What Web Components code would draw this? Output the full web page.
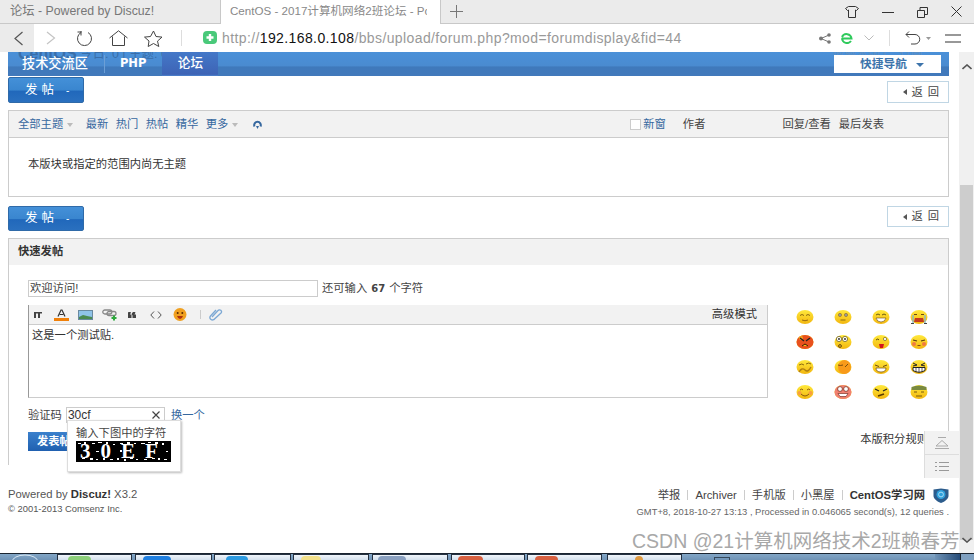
<!DOCTYPE html>
<html lang="zh-CN"><head><meta charset="utf-8"><title>CentOS</title>
<style>
html,body{margin:0;padding:0;height:100%}
body{width:974px;height:560px;overflow:hidden;display:flex;flex-direction:column;background:#fff;color:#333;font:11.3px/1.3 "Liberation Sans","Noto Sans CJK SC",sans-serif;position:relative}
</style></head><body>
<browser-chrome></browser-chrome>
<page-view>
  <forum-nav></forum-nav>
  <action-row top="1"><post-button slot="left" h="26">发帖</post-button><back-button slot="right" h="22" mt="4">返回</back-button></action-row>
  <thread-list></thread-list>
  <action-row top="9"><post-button slot="left" h="25">发帖</post-button><back-button slot="right" h="21" mt="0">返回</back-button></action-row>
  <quick-post></quick-post>
  <site-footer></site-footer>
</page-view>
<task-bar></task-bar>
<side-float></side-float>
<water-mark>CSDN @21计算机网络技术2班赖春芳</water-mark>
<script>
function def(name, html, setup){
  const t=document.createElement('template');t.innerHTML=html;
  customElements.define(name,class extends HTMLElement{
    constructor(){super();this.attachShadow({mode:'open'}).appendChild(t.content.cloneNode(true));}
    connectedCallback(){if(setup)setup(this,this.shadowRoot);}
  });
}
function faceSvg(kind,i){
  const F={
   a:'<path d="M4 6.500q2-2 4 0M10 6.500q2-2 4 0" stroke="#8a6a10" fill="none"/><path d="M6 11q3 1.500 6 0" stroke="#9a6a10" fill="none"/>',
   b:'<circle cx="6" cy="6" r="1.600" fill="#fff" stroke="#6a4a10" stroke-width=".6"/><circle cx="12" cy="6" r="1.600" fill="#fff" stroke="#6a4a10" stroke-width=".6"/><circle cx="6" cy="6" r=".8" fill="#222"/><circle cx="12" cy="6" r=".8" fill="#222"/><path d="M6.500 11h5" stroke="#8a6a10"/>',
   c:'<path d="M4 6q2-2 4 0M10 6q2-2 4 0" stroke="#6a5a10" fill="none"/><path d="M4 9h10q-1 4-5 4t-5-4z" fill="#fff" stroke="#6a4a10" stroke-width=".6"/>',
   d:'<path d="M4 5.500h3M11 5.500h3" stroke="#6a4a10"/><path d="M5 9h8l1 4H4z" fill="#c43a20"/><path d="M3 6v8M15 6v8" stroke="#7fb4d8" stroke-width="1.300"/><path d="M1 14.500h3M14 14.500h3" stroke="#444"/>',
   e:'<ellipse cx="9" cy="8" rx="8.500" ry="7" fill="#e8501e"/><circle cx="5" cy="4" r="2" fill="#f6a21a"/><path d="M4 4l4 3M14 4l-4 3" stroke="#222" stroke-width="1.300"/><path d="M6 12l3-2 3 2" stroke="#3a1a00" fill="#f6c21a"/>',
   f:'<circle cx="5" cy="5" r="2.600" fill="#fff" stroke="#5a4a10" stroke-width=".7"/><circle cx="11" cy="5" r="2.600" fill="#fff" stroke="#5a4a10" stroke-width=".7"/><circle cx="5" cy="5" r=".9" fill="#222"/><circle cx="11" cy="5" r=".9" fill="#222"/><circle cx="6" cy="12" r="1.400" fill="none" stroke="#6a4a10"/>',
   g:'<path d="M4 6q2-2 3 0" stroke="#5a4a10" fill="none"/><circle cx="13" cy="5" r="1.600" fill="#fff" stroke="#5a4a10" stroke-width=".6"/><path d="M7 10h5l-1 4H8z" fill="#d4141c"/>',
   h:'<path d="M3 6l4 1M15 6l-4 1" stroke="#5a3a10" stroke-width="1.200"/><circle cx="4" cy="10" r="2" fill="#f07a40"/><circle cx="14" cy="10" r="2" fill="#f07a40"/><path d="M7.500 11.500h3" stroke="#8a4a10"/>',
   i:'<path d="M3 6q3-2 5 0M10 5q3-2 5 0" stroke="#8a6a10" fill="none"/><path d="M3 13q3-5 6-2t6-3" stroke="#b08010" stroke-width="1.400" fill="none"/>',
   j:'<ellipse cx="10.500" cy="8" rx="6.500" ry="7" fill="#f89a1a"/><path d="M4 6q2 1 5 0M11 8l3-3" stroke="#7a5010" fill="none"/>',
   k:'<path d="M3 6l4 1.500M15 6l-4 1.500" stroke="#6a4a10"/><path d="M4 9h10q0 4-5 4t-5-4z" fill="#fff" stroke="#6a4a10" stroke-width=".7"/>',
   l:'<path d="M3 4l4 2-4 1M15 4l-4 2 4 1" stroke="#222" fill="none"/><path d="M3 8.500h12v3q-6 3.500-12 0z" fill="#fff" stroke="#222"/><path d="M6 8.500v4.500M9 8.500v5M12 8.500v4.500" stroke="#222" stroke-width=".7"/>',
   m:'<circle cx="3.500" cy="9" r="2" fill="#f8a040"/><circle cx="14.500" cy="9" r="2" fill="#f8a040"/><path d="M4 6q2-2 3 0M11 6q2-2 3 0M5 10q4 4 8 0" stroke="#8a5a10" fill="none"/>',
   n:'<ellipse cx="9" cy="8" rx="8.500" ry="7" fill="#f08070"/><circle cx="6" cy="5" r="2.400" fill="#fff" stroke="#6a2010" stroke-width=".7"/><circle cx="12" cy="5" r="2.400" fill="#fff" stroke="#6a2010" stroke-width=".7"/><path d="M4 9.500h10l-2 3H6z" fill="#fff" stroke="#6a2010" stroke-width=".6"/>',
   o:'<path d="M3 5l4 2M15 5l-4 2" stroke="#222" stroke-width="1.200"/><path d="M6 12l6-2" stroke="#5a3a00" stroke-width="1.500"/>',
   p:'<path d="M1.500 3q7.500-3 15 0v3h-15z" fill="#7a8a40"/><path d="M4 8h3M11 8h3M6 12h6" stroke="#7a5a10"/>'
  };
  return '<svg width="18" height="15" viewBox="0 0 18 15"><defs><linearGradient id="g'+i+'" x1="0" y1="0" x2="0" y2="1"><stop offset="0" stop-color="#ffe93c"/><stop offset="1" stop-color="#f2b60f"/></linearGradient></defs><ellipse cx="9" cy="8" rx="8.500" ry="7" fill="url(#g'+i+')"/>'+F[kind]+'</svg>';
}

def('browser-chrome',`<style>
:host{display:block;flex:none;height:52px;position:relative;z-index:3;background:#fff;color:#555}
.tabs{height:23px;background:#ebebeb;display:flex;border-bottom:1px solid #c8c8c8;box-sizing:content-box}
.tab{font:12.3px/22px "Liberation Sans","Noto Sans CJK SC",sans-serif;white-space:nowrap;overflow:hidden;color:#777}
.t1{width:210px;padding-left:10px}
.t2{width:210px;padding-left:9px;background:#fff;border:1px solid #c8c8c8;border-width:0 1px;height:24px;color:#888;font-size:11.6px}
.t2 span{display:block;width:197px;overflow:hidden}
.plus{margin:5px 0 0 9px}
.ctl{margin-left:auto;display:flex;gap:23px;align-items:center;padding-right:12px}
.bar{height:28px;display:flex;align-items:center}
.back{width:34px;height:28px;background:#ebebeb;display:flex;align-items:center;justify-content:center}
.ic{display:block;flex:none}
.url{font:14px/28px "Liberation Sans",sans-serif;letter-spacing:.39px;color:#999;white-space:nowrap;margin-left:5px}
.url b{font-weight:400;color:#111}
.sep{width:1px;height:16px;background:#ddd}
.r{margin-left:auto;display:flex;align-items:center;padding-right:13px}
</style>
<div class="tabs"><div class="tab t1">论坛 - Powered by Discuz!</div><div class="tab t2"><span>CentOS - 2017计算机网络2班论坛 - Powered</span></div>
<svg class="plus ic" width="13" height="13" viewBox="0 0 13 13"><path d="M6.500 0v13M0 6.500h13" stroke="#777"/></svg>
<div class="ctl">
<svg class="ic" width="14" height="12" viewBox="0 0 14 12"><path d="M.5 2.500 3.500.5h7l3 2-2 2-1-.5v7.500h-7V4l-1 .5z" fill="none" stroke="#333"/></svg>
<svg class="ic" width="12" height="12" viewBox="0 0 12 12"><path d="M0 6.500h12" stroke="#333"/></svg>
<svg class="ic" width="11" height="12" viewBox="0 0 11 12"><path d="M.5 4.500h7v7h-7zM3 4.500V1.500h7.500v7H7.500" fill="none" stroke="#333"/></svg>
<svg class="ic" width="11" height="11" viewBox="0 0 11 11"><path d="M.5.500l10 10M10.500.500l-10 10" stroke="#333"/></svg>
</div></div>
<div class="bar">
<div class="back"><svg class="ic" style="margin-left:2px" width="11" height="15" viewBox="0 0 11 15"><path d="M9.500 1 2 7.500 9.500 14" fill="none" stroke="#555" stroke-width="1.200"/></svg></div>
<svg class="ic" style="margin-left:12px" width="10" height="14" viewBox="0 0 10 14"><path d="M1 1l7.500 6L1 13" fill="none" stroke="#c4c4c4" stroke-width="1.200"/></svg>
<svg class="ic" style="margin-left:19px" width="19" height="17" viewBox="0 0 19 17"><path d="M6 2.500a7 7 0 1 0 7 0M6 1v4.500" fill="none" stroke="#444"/><path d="M2.500 2h4" stroke="#444"/></svg>
<svg class="ic" style="margin-left:15px" width="19" height="16" viewBox="0 0 19 16"><path d="M.5 8 9.500.8 18.500 8M3.500 6.500v9h12v-9" fill="none" stroke="#444"/></svg>
<svg class="ic" style="margin-left:16px" width="19" height="17" viewBox="0 0 19 17"><path d="M9.500 1l2.500 5.500 6 .6-4.500 4 1.300 5.400-5.300-3-5.300 3L5 11 .5 7.100l6-.6z" fill="none" stroke="#444"/></svg>
<span style="margin-left:18px" class="sep"></span>
<svg class="ic" style="margin-left:21px" width="14" height="14" viewBox="0 0 14 14"><rect width="14" height="13" rx="4" fill="#49c97a"/><path d="M7 3v7M3.500 6.500h7" stroke="#fff" stroke-width="2.400"/></svg>
<span class="url">http://<b>192.168.0.108</b>/bbs/upload/forum.php?mod=forumdisplay&amp;fid=44</span>
<div class="r">
<svg class="ic" width="12" height="11" viewBox="0 0 12 11"><circle cx="2" cy="5.500" r="2" fill="#777"/><circle cx="10" cy="2" r="1.800" fill="#777"/><circle cx="10" cy="9" r="1.800" fill="#777"/><path d="M2 5.500 10 2M2 5.500 10 9" stroke="#777"/></svg>
<svg class="ic" style="margin-left:9px" width="13" height="12" viewBox="0 0 13 12"><path d="M1.500 6.500h10a5 5 0 0 0-9.500-1.500M11 9a5 5 0 0 1-9-2.500" fill="none" stroke="#2fca5c" stroke-width="2"/></svg>
<svg class="ic" style="margin-left:11px" width="10" height="6" viewBox="0 0 10 6"><path d="M.5.500l4.500 4.500L9.500.500" fill="none" stroke="#bbb"/></svg>
<span class="sep" style="margin-left:15px"></span>
<svg class="ic" style="margin-left:15px" width="16" height="14" viewBox="0 0 16 14"><path d="M4 .5 1 3.500l3 3M1 3.500h9a4.700 4.700 0 0 1 0 9.500H6" fill="none" stroke="#444"/></svg>
<svg class="ic" style="margin-left:5px" width="5" height="3" viewBox="0 0 5 3"><path d="M0 0h5L2.500 3z" fill="#999"/></svg>
<svg class="ic" style="margin-left:14px" width="16" height="9" viewBox="0 0 16 9"><path d="M0 1h16M0 8h16" stroke="#333" stroke-width="1.100"/></svg>
</div></div>`);

def('page-view',`<style>
:host{display:block;flex:1;min-height:0;position:relative;padding:0 25px 0 8px;overflow:hidden}
.sb{position:absolute;right:0;top:0;bottom:0;width:15px;background:#f0f0f0}
.th{position:absolute;left:1px;right:1px;top:133px;height:355px;background:#cdcdcd}
.up,.dn{position:absolute;left:3px}
.up{top:12px}.dn{top:485px}
</style><slot></slot>
<div class="sb"><svg class="up" width="10" height="6" viewBox="0 0 10 6"><path d="M.5 5 5 1l4.500 4" fill="none" stroke="#555" stroke-width="1.600"/></svg><div class="th"></div>
<svg class="dn" width="10" height="6" viewBox="0 0 10 6"><path d="M.5 1 5 5l4.500-4" fill="none" stroke="#555" stroke-width="1.600"/></svg></div>`);

def('forum-nav',`<style>
:host{display:flex;height:24px;position:relative;background:linear-gradient(#4a90d8,#4a8bd0 58%,#3f79bb 62%,#4279bb);color:#fff;font-size:13.2px;line-height:23px;align-items:stretch}
.i{padding:0 16px 0 14px;display:block;font-weight:500;position:relative}
.a{padding:0;width:56px;text-align:center;background:linear-gradient(#4478c8,#3d62b4);box-shadow:inset 0 -2px 2px -2px #6fc0ff;font-size:12.6px}
.s{width:1px;background:#6c9fd6;margin:3px 0;position:relative}
.php{font:bold 11.5px/23px "DejaVu Sans",sans-serif;padding:0 16px 0 15px}
.ghost{position:absolute;top:-3px;font-size:12.5px;line-height:10px;color:#3a6ea9;white-space:nowrap}
.q{position:relative;z-index:1;margin:3px 8px 3px auto;width:107px;background:#fff;color:#3d74ab;font-weight:700;font-size:11.7px;line-height:18px;display:flex;justify-content:center;align-items:center;gap:9px;padding-left:9px;box-sizing:border-box}
.q i{border:4px solid transparent;border-top-color:#3d74ab;border-bottom:0;width:0;height:0;margin-top:2px}
</style>
<span class="ghost" style="left:10px;font:bold 16px/10px 'Liberation Sans',sans-serif">CentOS</span>
<span class="ghost" style="left:72px">今日: 0 | 主题: 0</span>
<span class="ghost" style="left:825px;color:#5f8fc2;font-size:11.7px">收藏本版 | &nbsp;&nbsp;&nbsp;订阅</span>
<span class="i">技术交流区</span><span class="s"></span><span class="i php">PHP</span><span class="i a">论坛</span>
<span class="q">快捷导航<i></i></span>`);

def('action-row',`<style>:host{display:flex;justify-content:space-between;align-items:flex-start}</style><slot name="left"></slot><slot name="right"></slot>`,(el)=>{el.style.marginTop=el.getAttribute('top')+'px';});

def('post-button',`<style>
:host{display:flex;align-items:center;box-sizing:border-box;width:76px;color:#fff;border:1px solid #2f6aa8;border-radius:2px;background:linear-gradient(#4490d8,#3a86cf 50%,#2168bb 55%,#2a70bf);font-size:12.5px;padding-left:16px;letter-spacing:4px}
i{font-style:normal;margin-left:8px;font-size:10px}
</style><slot></slot><i>-</i>`,(el)=>{el.style.height=el.getAttribute('h')+'px';});

def('back-button',`<style>
:host{display:flex;align-items:center;justify-content:flex-end;box-sizing:border-box;width:62px;border:1px solid #c0d6e4;background:#fff;color:#444;padding-right:9px;letter-spacing:5px;font-size:11.3px}
i{border:3.5px solid transparent;border-right:4px solid #555;border-left:0;margin-right:4px;width:0;height:0}
span{margin-right:-5px}
</style><i></i><span><slot></slot></span>`,(el)=>{el.style.height=el.getAttribute('h')+'px';el.style.marginTop=el.getAttribute('mt')+'px';});

def('thread-list',`<style>
:host{display:block;margin-top:7px;border:1px solid #ccc;height:87px;box-sizing:border-box}
.h{height:26px;background:#f2f2f2;border-bottom:1px solid #ccc;box-sizing:content-box;display:flex;align-items:center;padding-left:9px;color:#36689f;white-space:nowrap}
.c{border:3.5px solid transparent;border-top:4px solid #bbb;border-bottom:0;width:0;height:0;margin:1px 0 0 4px}
.m{margin-left:7.4px}
.sp{flex:1}
.cb{width:9px;height:9px;border:1px solid #ccc;background:#fff;margin-right:2px}
.k{color:#444}
.e{padding:19px 0 0 19px;color:#333;line-height:15px}
</style>
<div class="h"><span>全部主题</span><span class="c"></span><span style="margin-left:12.5px">最新</span><span class="m">热门</span><span class="m">热帖</span><span class="m">精华</span><span class="m">更多</span><span class="c"></span>
<svg style="margin-left:15px" width="9" height="9" viewBox="0 0 9 9"><path d="M1.500 6.500a3.300 3.300 0 1 1 6 0" fill="none" stroke="#36689f" stroke-width="2"/><path d="M3 6l1.500 3L6 6z" fill="#36689f"/></svg>
<span class="sp"></span><span class="cb"></span><span>新窗</span><span class="k" style="margin-left:17px">作者</span><span class="k" style="margin-left:77px">回复/查看</span><span class="k" style="margin-left:8px;margin-right:64px">最后发表</span></div>
<div class="e">本版块或指定的范围内尚无主题</div>`);

def('smiley-grid',`<style>
:host{display:grid;grid-template-columns:repeat(4,18px);column-gap:20px;row-gap:10px;margin:4px 0 0 28px;align-content:start}
svg{display:block}
</style><span id="s" style="display:contents"></span>`,(el,sr)=>{
  sr.getElementById('s').innerHTML='abcdefghijklmnop'.split('').map((k,i)=>faceSvg(k,i)).join('');
});

def('captcha-box',`<style>
:host{display:flex;align-items:center;position:relative;height:16px;white-space:nowrap;color:#444}
.in{margin-left:4px;width:99px;height:16px;box-sizing:border-box;border:1px solid #ccc;background:#fff;display:flex;justify-content:space-between;align-items:center;padding:0 4px 0 1px;color:#333;font:12px/14px "Liberation Sans",sans-serif}
a{color:#36689f;margin-left:6px}
.pop{position:absolute;left:39px;top:13px;width:114px;height:52px;box-sizing:border-box;background:#fff;border:1px solid #ddd;box-shadow:1px 1px 2px #bbb;padding:5px 0 0 8px;z-index:2;color:#444;line-height:14px}
.cap{margin-top:1px;width:95px;height:21px;background:#000;position:relative;overflow:hidden;display:flex;align-items:center;color:#fff;font:bold 21px/21px "Liberation Serif",serif;letter-spacing:10px;padding-left:4px;box-sizing:border-box}
svg.n{position:absolute;inset:0}
</style>验证码<span class="in">30cf<svg width="8" height="8" viewBox="0 0 8 8"><path d="M.5.500l7 7M7.500.500l-7 7" stroke="#444" stroke-width="1.200"/></svg></span><a>换一个</a>
<div class="pop">输入下图中的字符<div class="cap"><span>30EF</span><svg class="n" width="95" height="21" viewBox="0 0 95 21"><path d="M2 2h3v1H2zM8 1h2v2H8zM16 2h3v1h-3zM22 1h4v1h-4zM30 1h2v2h-2zM37 3h2v1h-2zM44 2h3v1h-3zM51 1h3v2h-3zM58 2h2v1h-2zM65 2h4v1h-4zM72 1h3v1h-3zM79 1h3v2h-3zM86 2h2v2h-2zM6 17h3v1H6zM14 17h3v2h-3zM20 18h2v1h-2zM27 17h2v2h-2zM34 18h3v1h-3zM41 17h2v2h-2zM48 18h2v2h-2zM54 17h3v1h-3zM60 18h2v1h-2zM68 18h3v1h-3zM76 17h3v1h-3zM82 17h2v2h-2zM88 18h3v1h-3zM20 10h3v1h-3zM44 9h2v2h-2zM90 10h2v1h-2z" fill="#fff"/></svg></div></div>`);

def('quick-post',`<style>
:host{display:block;margin-top:7px;height:227px;box-sizing:border-box;border:1px solid #ccc;border-bottom:0}
.h{height:26px;background:#f2f2f2;font-weight:700;line-height:25px;padding-left:9px;color:#333;margin-bottom:15px}
.b{padding:0 19px}
.t{display:flex;align-items:center;height:17px;white-space:nowrap;color:#444}
.in{width:290px;height:17px;box-sizing:border-box;border:1px solid #ccc;padding-left:1px;line-height:15px;margin-right:4px;color:#444}
.in2{font-weight:700;margin:0 4px;font-family:"DejaVu Sans",sans-serif;font-size:10px}
.row{display:flex;margin-top:8px}
.ed{width:740px;height:93px;box-sizing:border-box;border:1px solid #ccc;border-left-color:#999;border-top:0}
.tb{height:19px;background:#f2f2f2;border-bottom:1px solid #ccc;box-sizing:content-box;display:flex;align-items:center;position:relative;padding-left:4px;color:#333}
.tb svg{display:block;flex:none}
.adv{margin-left:auto;padding-right:10px}
.tx{padding:3px;line-height:15px;color:#333}
.v{margin-top:8px}
.sub{display:flex;justify-content:space-between;align-items:flex-start;margin-top:9px;height:19px}
.btn{width:70px;height:19px;background:linear-gradient(#3a80cc,#2060b0);color:#fff;font-weight:700;line-height:18px;padding-left:9px;box-sizing:border-box;white-space:nowrap}
.rules{margin-right:1px;color:#333;line-height:14px}
</style>
<div class="h">快速发帖</div>
<div class="b">
<div class="t"><div class="in">欢迎访问!</div>还可输入<span class="in2">67</span>个字符</div>
<div class="row"><div class="ed"><div class="tb">
<svg width="10" height="8" viewBox="0 0 10 8"><path d="M1 1h8v1.500H7V7H5V2.500H3V7H1z" fill="#444"/></svg>
<svg style="margin-left:11px" width="15" height="12" viewBox="0 0 15 12"><path d="M4 7.500 7 1h1l3 6.500" fill="none" stroke="#333" stroke-width="1.200"/><path d="M5.500 5.500h4" stroke="#333"/><rect y="9" width="15" height="3" fill="#f0800a"/></svg>
<svg style="margin-left:9px" width="15" height="10" viewBox="0 0 15 10"><rect x=".5" y=".5" width="14" height="9" fill="#8fc3e8" stroke="#6a8aa0"/><path d="M1 7l4-2 4 1 5 1v2H1z" fill="#4a8a50"/></svg>
<svg style="margin-left:9px" width="16" height="12" viewBox="0 0 16 12"><rect x=".8" y="1" width="9" height="4" rx="2" fill="none" stroke="#888" stroke-width="1.300"/><rect x="5" y="2.500" width="9" height="4" rx="2" fill="none" stroke="#888" stroke-width="1.300"/><path d="M12 6.500v5M9.500 9h5" stroke="#2da83c" stroke-width="2"/></svg>
<svg style="margin-left:10px" width="8" height="6" viewBox="0 0 8 6"><path d="M0 3.500a2 2 0 0 1 3-3L2 2.500h1.500V6H0zM4.500 3.500a2 2 0 0 1 3-3l-1 2H8V6H4.500z" fill="#444"/></svg>
<svg style="margin-left:14px" width="12" height="8" viewBox="0 0 12 8"><path d="M4 .5.800 4 4 7.500M8 .5 11.200 4 8 7.500" fill="none" stroke="#555"/></svg>
<svg style="margin-left:11px" width="14" height="13" viewBox="0 0 14 13"><circle cx="7" cy="6.500" r="6.500" fill="#f0a020"/><circle cx="4.700" cy="5" r="1" fill="#5a2a00"/><circle cx="9.300" cy="5" r="1" fill="#5a2a00"/><path d="M4 8h6q-1 3-3 3T4 8z" fill="#b03010"/></svg>
<span style="width:1px;height:9px;background:#ccc;margin-left:13px"></span>
<svg style="margin-left:8px" width="14" height="13" viewBox="0 0 14 13"><path d="M3 9l6-6.500a1.800 1.800 0 0 1 3 2.500L5.500 11a2.500 2.500 0 0 1-4-3L7 2" fill="none" stroke="#7ca8d4" stroke-width="1.300"/></svg>
<span class="adv">高级模式</span></div><div class="tx">这是一个测试贴.</div></div>
<smiley-grid></smiley-grid></div>
<captcha-box class="v"></captcha-box>
<div class="sub"><div class="btn">发表帖子</div><div class="rules">本版积分规则</div></div>
</div>`);

def('site-footer',`<style>
:host{display:flex;justify-content:space-between;margin-top:19px;color:#555;white-space:nowrap}
.l{padding-top:3px}
.p b{color:#333}
.p{line-height:15px}
.c2{font-size:9.4px;line-height:14px;color:#555}
.r{text-align:right}
.n{display:flex;justify-content:flex-end;align-items:center;gap:7px;height:20px;color:#444;margin-top:1px}
.n i{width:1px;height:10px;background:#ccc}
.n b{color:#333}
.g{font-size:9.4px;line-height:13px;color:#666}
.sh{margin-left:1px}
</style>
<div class="l"><div class="p">Powered by <b>Discuz!</b> X3.2</div><div class="c2">© 2001-2013 Comsenz Inc.</div></div>
<div class="r"><div class="n">举报<i></i>Archiver<i></i>手机版<i></i>小黑屋<i></i><b>CentOS学习网</b>
<svg class="sh" width="16" height="15" viewBox="0 0 16 15"><path d="M.5 1.500 8 .5l7.500 1v6.500C15.500 11 11 14 8 15 5 14 .5 11 .5 8z" fill="#2c5c8c"/><circle cx="8" cy="6.500" r="4.500" fill="#2ea0dc"/><circle cx="8" cy="6.500" r="2.400" fill="none" stroke="#a8dcf4"/></svg></div>
<div class="g">GMT+8, 2018-10-27 13:13 , Processed in 0.046065 second(s), 12 queries .</div></div>`);

def('task-bar',`<style>
:host{display:flex;flex:none;height:7px;box-sizing:border-box;border-top:1px solid #1a2430;background:linear-gradient(#82a6c6,#6f93b6);position:relative;z-index:2;overflow:hidden}
.b{position:absolute;top:0;height:8px;box-sizing:border-box;border:1px solid #243040;border-bottom:0;background:linear-gradient(#f0f5fa,#c8d8e8);overflow:hidden}
</style><span id="s" style="display:contents"></span>
<svg style="position:absolute;left:10px;top:0" width="30" height="6" viewBox="0 0 30 6"><path d="M2 8a13 7 0 0 1 26 0" fill="none" stroke="#d8e8f4"/></svg>`,(el,sr)=>{
  const w=[[57,75,10,23,'#8ccf7a'],[135,77,7,28,'#1f7fe0'],[214,77,11,22,'#2c9ae0'],[293,76,7,20,'#f2e08a'],[372,76,5,28,'#8aa0c0'],[451,74,6,25,'#d86040'],[527,75,7,23,'#d86040'],[607,75,27,8,'#e09a40']];
  sr.getElementById('s').innerHTML=w.map(b=>`<span class="b" style="left:${b[0]}px;width:${b[1]}px"><i style="display:block;margin:1px 0 0 ${b[2]}px;width:${b[3]}px;height:5px;border-radius:4px 4px 0 0;background:${b[4]}"></i></span>`).join('')+'<i style="position:absolute;left:714px;top:3px;width:16px;height:3px;border:1px solid #33475a;border-bottom:0;box-sizing:border-box"></i><i style="position:absolute;left:935px;width:25px;top:0;height:6px;background:linear-gradient(90deg,#6f93b6,#264c78)"></i><i style="position:absolute;left:960px;width:14px;top:0;height:6px;border-left:1px solid #1a2430;box-sizing:border-box;background:#7fa0c0"></i>';
});

def('side-float',`<style>
:host{position:absolute;left:924px;top:431px;width:35px;z-index:2;background:#f2f2f2;border-left:1px solid #ddd;box-sizing:border-box;display:block}
div{height:23px;display:flex;align-items:center;justify-content:center;border-bottom:1px solid #ddd}
div+div{height:23px;border-bottom:0}
</style><div><svg width="14" height="12" viewBox="0 0 14 12"><path d="M3 .5h8M1 9 7 3.500 13 9zM0 11.500h14" fill="#f2f2f2" stroke="#aaa"/></svg></div>
<div><svg width="14" height="11" viewBox="0 0 14 11"><path d="M0 1.500h2M4 1.500h10M0 5.500h2M4 5.500h10M0 9.500h2M4 9.500h10" stroke="#999" stroke-width="1.200"/></svg></div>`);

def('water-mark',`<style>
:host{position:absolute;left:632px;top:528px;z-index:4;font:19.5px/26px "Liberation Sans","Noto Sans CJK SC",sans-serif;color:#a8a8a8;white-space:nowrap;text-shadow:0 0 1px #fff}
</style><slot></slot>`);
</script>
</body></html>
